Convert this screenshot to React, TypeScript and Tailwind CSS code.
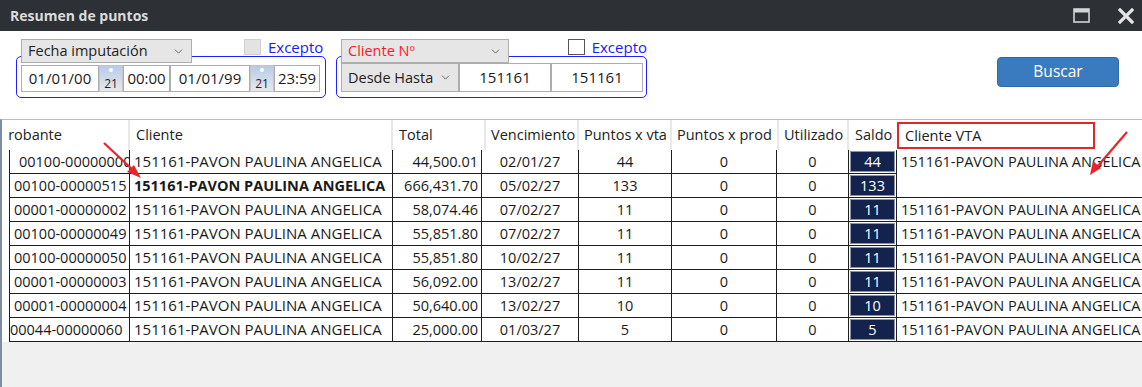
import React from "react";
import { ChevronDown } from "lucide-react";

type Row = {
  comp: string;
  compPad: string;
  bold?: boolean;
  total: string;
  venc: string;
  pv: string;
  saldo: string;
  vta: boolean;
};

const rows: Row[] = [
  { comp: "00100-00000000", compPad: "pl-[9px]", total: "44,500.01", venc: "02/01/27", pv: "44", saldo: "44", vta: true },
  { comp: "00100-00000515", compPad: "pl-[4px]", bold: true, total: "666,431.70", venc: "05/02/27", pv: "133", saldo: "133", vta: false },
  { comp: "00001-00000002", compPad: "pl-[4px]", total: "58,074.46", venc: "07/02/27", pv: "11", saldo: "11", vta: true },
  { comp: "00100-00000049", compPad: "pl-[4px]", total: "55,851.80", venc: "07/02/27", pv: "11", saldo: "11", vta: true },
  { comp: "00100-00000050", compPad: "pl-[4px]", total: "55,851.80", venc: "10/02/27", pv: "11", saldo: "11", vta: true },
  { comp: "00001-00000003", compPad: "pl-[4px]", total: "56,092.00", venc: "13/02/27", pv: "11", saldo: "11", vta: true },
  { comp: "00001-00000004", compPad: "pl-[4px]", total: "50,640.00", venc: "13/02/27", pv: "10", saldo: "10", vta: true },
  { comp: "00044-00000060", compPad: "pl-0", total: "25,000.00", venc: "01/03/27", pv: "5", saldo: "5", vta: true },
];

const CLIENTE = "151161-PAVON PAULINA ANGELICA";

function Combo({ label, className }: { label: string; className: string }) {
  return (
    <div
      className={
        "flex items-center justify-between border border-[#adadad] bg-[#e6e6e6] pl-[6px] pr-[6px] text-[14.5px] " +
        className
      }
    >
      <span>{label}</span>
      <ChevronDown size={13} strokeWidth={1.6} className="text-[#555]" />
    </div>
  );
}

function Field({ value, className }: { value: string; className: string }) {
  return (
    <div
      className={
        "flex items-center justify-center border border-[#adadad] bg-white text-[15px] text-[#1a1a1a] " +
        className
      }
    >
      {value}
    </div>
  );
}

function CalButton() {
  return (
    <div className="flex h-full w-[24px] flex-col items-center border border-[#c4c4c4] bg-gradient-to-b from-[#b5cbe9] to-[#e9e9e9]">
      <div className="mt-[2px] h-[4px] w-[4px] rounded-full bg-white" />
      <span className="mt-auto mb-[1px] text-[12px] leading-none text-[#222]">21</span>
    </div>
  );
}

const App = () => {
  return (
    <div className="relative flex h-[387px] w-[1142px] flex-col overflow-hidden bg-[#f0f0f0] font-['Open_Sans',sans-serif] text-[#1a1a1a]">
      {/* Title bar */}
      <div className="flex h-[31px] shrink-0 items-center justify-between bg-[#2d3135] pl-[10px] pr-[8px]">
        <span className="text-[14px] font-bold text-[#dcdcdc]">Resumen de puntos</span>
        <div className="flex items-center gap-[28px]">
          <svg width="17" height="15" viewBox="0 0 17 15">
            <rect x="1" y="1" width="15" height="13" fill="none" stroke="#d4d4d4" strokeWidth="1.6" />
            <rect x="1" y="1" width="15" height="3.5" fill="#d4d4d4" />
          </svg>
          <svg width="16" height="16" viewBox="0 0 16 16">
            <path d="M2 2 L14 14 M14 2 L2 14" stroke="#e4e4e4" strokeWidth="3.2" strokeLinecap="square" />
          </svg>
        </div>
      </div>

      {/* Filters */}
      <div className="flex h-[88px] shrink-0 bg-white pl-[16px] pt-[8px]">
        {/* Group fecha */}
        <div className="flex w-[310px] flex-col">
          <div className="relative z-10 flex h-[24px] items-start">
            <Combo label="Fecha imputación" className="ml-[5px] h-[24px] w-[171px] text-[#222]" />
            <div className="ml-[52px] h-[16px] w-[17px] border border-[#cfcfcf] bg-[#e3e3e3]" />
            <span className="ml-[7px] -mt-[3px] text-[15px] text-[#1a1aff]">Excepto</span>
          </div>
          <div className="-mt-[7px] flex h-[42px] items-start rounded-[5px] border-[1.5px] border-[#1f1fff] pl-[4px] pt-[8px]">
            <div className="flex h-[27px]">
              <Field value="01/01/00" className="w-[78px]" />
              <CalButton />
              <Field value="00:00" className="w-[47px]" />
              <Field value="01/01/99" className="w-[80px]" />
              <CalButton />
              <Field value="23:59" className="w-[46px]" />
            </div>
          </div>
        </div>

        {/* Group cliente */}
        <div className="ml-[10px] flex w-[311px] flex-col">
          <div className="relative z-10 flex h-[24px] items-start">
            <Combo label="Cliente Nº" className="ml-[5px] h-[24px] w-[171px] text-[#ff1a1a]" />
            <div className="ml-[59px] h-[16px] w-[17px] border border-[#555] bg-white" />
            <span className="ml-[7px] -mt-[3px] text-[15px] text-[#1a1aff]">Excepto</span>
          </div>
          <div className="-mt-[7px] flex h-[42px] items-start rounded-[5px] border-[1.5px] border-[#1f1fff] pl-[4px] pt-[6px]">
            <div className="flex h-[29px]">
              <Combo label="Desde Hasta" className="h-full w-[118px] text-[#222]" />
              <Field value="151161" className="w-[92px]" />
              <Field value="151161" className="w-[92px]" />
            </div>
          </div>
        </div>

        <div className="ml-[350px] mt-[18px]">
          <button className="h-[30px] w-[122px] rounded-[4px] border border-[#2f69a6] bg-[#3a7bbf] text-[15.5px] text-white">
            Buscar
          </button>
        </div>
      </div>

      {/* Grid */}
      <div className="flex flex-1 flex-col border-l-2 border-t border-l-[#7d8ea3] border-t-[#b3bcc8]">
        {/* Header */}
        <div className="flex h-[30px] shrink-0 bg-white text-[14.5px] text-[#222]">
          <div className="w-[7px]" />
          <div className="flex w-[121px] items-center overflow-hidden border-r-2 border-[#e8e8e8] whitespace-nowrap">
            <span className="-ml-[41px]">Comprobante</span>
          </div>
          <div className="flex w-[263px] items-center border-r-2 border-[#e8e8e8] pl-[6px]">Cliente</div>
          <div className="flex w-[93px] items-center border-r-2 border-[#e8e8e8] pl-[6px]">Total</div>
          <div className="flex w-[93px] items-center border-r-2 border-[#e8e8e8] pl-[5px]">Vencimiento</div>
          <div className="flex w-[93px] items-center border-r-2 border-[#e8e8e8] pl-[5px]">Puntos x vta</div>
          <div className="flex w-[107px] items-center border-r-2 border-[#e8e8e8] pl-[5px]">Puntos x prod</div>
          <div className="flex w-[70px] items-center border-r-2 border-[#e8e8e8] pl-[5px]">Utilizado</div>
          <div className="flex w-[48px] items-center pl-[6px]">Saldo</div>
          <div className="flex flex-1 items-center pt-[1px]">
            <div className="flex h-[27px] w-[198px] items-center border-2 border-[#e3262a] pl-[6px]">Cliente VTA</div>
          </div>
        </div>

        {/* Rows */}
        {rows.map((r, i) => (
          <div key={i} className="flex h-[24px] shrink-0 bg-white text-[14.5px] whitespace-nowrap">
            <div className="w-[7px] bg-white" />
            <div className={"flex w-[121px] items-center overflow-hidden border-x border-b border-[#1e1e1e] " + r.compPad}>
              {r.comp}
            </div>
            <div
              className={
                "flex w-[263px] items-center overflow-hidden border-r border-b border-[#1e1e1e] pl-[4px] " +
                (r.bold ? "text-[14.5px] font-bold" : "text-[15px]")
              }
            >
              {CLIENTE}
            </div>
            <div className="flex w-[89px] items-center justify-end border-r border-b border-[#1e1e1e] pr-[3px]">{r.total}</div>
            <div className="flex w-[97px] items-center justify-center border-r border-b border-[#1e1e1e]">{r.venc}</div>
            <div className="flex w-[93px] items-center justify-center border-r border-b border-[#1e1e1e]">{r.pv}</div>
            <div className="flex w-[105px] items-center justify-center border-r border-b border-[#1e1e1e]">0</div>
            <div className="flex w-[72px] items-center justify-center border-r border-b border-[#1e1e1e]">0</div>
            <div className="flex w-[48px] items-stretch border-r border-b border-[#1e1e1e] p-[1px]">
              <div className="flex flex-1 items-center justify-center border border-[#8a92a8] bg-[#14224e] text-white">
                {r.saldo}
              </div>
            </div>
            <div
              className={
                "flex flex-1 items-center overflow-hidden border-b pl-[4px] " +
                (i === 0 ? "border-transparent" : "border-[#1e1e1e]")
              }
            >
              {r.vta ? CLIENTE : ""}
            </div>
          </div>
        ))}
      </div>

      {/* Annotation arrows */}
      <svg className="pointer-events-none absolute left-0 top-0" width="1142" height="387">
        <line x1="104" y1="143" x2="134" y2="171" stroke="#e8262a" strokeWidth="2.2" />
        <polygon points="141,178 127,172 134,165" fill="#e8262a" />
        <line x1="1127" y1="132" x2="1097" y2="167" stroke="#e8262a" strokeWidth="2.2" />
        <polygon points="1090,175 1093,161 1101,168" fill="#e8262a" />
      </svg>
    </div>
  );
};

export default App;
